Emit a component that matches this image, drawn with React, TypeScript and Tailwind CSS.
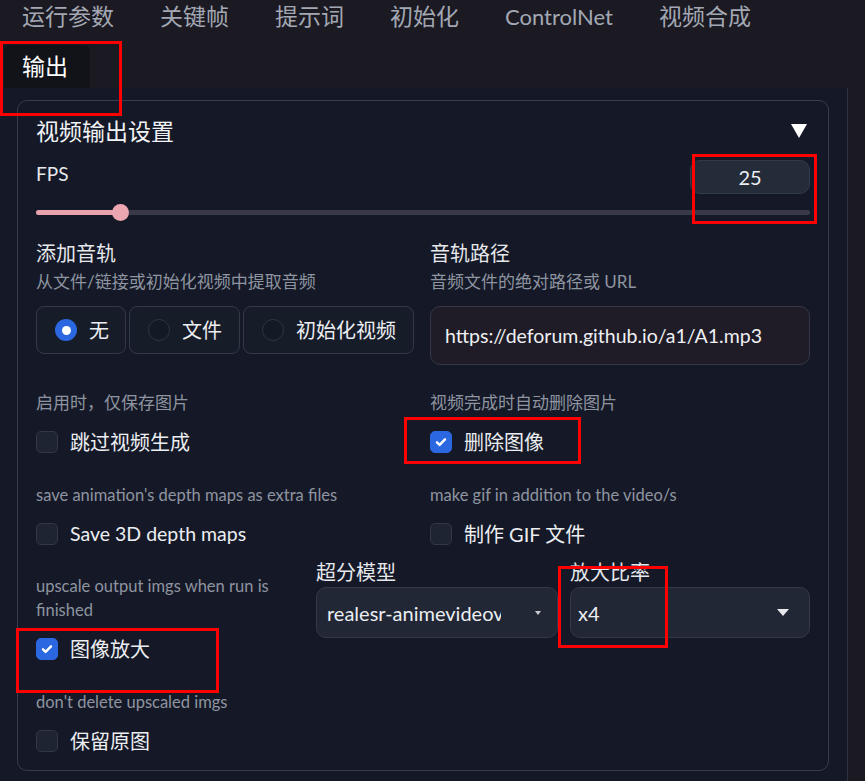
import React from "react";

const tabs = ["运行参数", "关键帧", "提示词", "初始化", "ControlNet", "视频合成"];

const Check = ({ on }: { on?: boolean }) => (
  <span
    className={
      "w-[22px] h-[22px] rounded-[5px] flex items-center justify-center shrink-0 border " +
      (on ? "bg-[#2b67e0] border-[#2b67e0]" : "bg-[#1e2431] border-[#303746]")
    }
  >
    {on && (
      <svg width="14" height="14" viewBox="0 0 14 14">
        <path d="M3 7.3l2.6 2.6L11 4.3" fill="none" stroke="#fff" strokeWidth="2.4" strokeLinecap="round" strokeLinejoin="round" />
      </svg>
    )}
  </span>
);

const CheckRow = ({ label, on, en }: { label: string; on?: boolean; en?: boolean }) => (
  <div className="flex items-center gap-[12px] h-[22px]">
    <Check on={on} />
    <span className={"leading-[22px] text-[#eceef2] " + (en ? "text-[19.5px]" : "text-[20px]")}>{label}</span>
  </div>
);

const Radio = ({ label, on, w }: { label: string; on?: boolean; w: string }) => (
  <div className={"h-[48px] flex items-center gap-[12px] pl-[18px] rounded-[8px] border border-[#323948] bg-[#171c29] " + w}>
    <span
      className={
        "w-[22px] h-[22px] rounded-full flex items-center justify-center shrink-0 " +
        (on ? "bg-[#2b67e0]" : "bg-[#141926] border border-[#2e3543]")
      }
    >
      {on && <span className="w-[9px] h-[9px] rounded-full bg-white" />}
    </span>
    <span className="text-[20px] leading-[22px] text-[#eceef2]">{label}</span>
  </div>
);

const Desc = ({ children, en }: { children: React.ReactNode; en?: boolean }) => (
  <p className={"leading-[20px] text-[#8e94a0] whitespace-nowrap " + (en ? "text-[16.5px]" : "text-[17px]")}>{children}</p>
);

const Label = ({ children }: { children: React.ReactNode }) => (
  <p className="text-[20px] leading-[22px] text-[#e6e8ec]">{children}</p>
);

const RedBox = ({ cls }: { cls: string }) => (
  <div className={"absolute border-[3px] border-[#f00] pointer-events-none " + cls} />
);

export default function App() {
  return (
    <div className="w-[865px] h-[781px] bg-[#1b1a23] relative overflow-hidden font-['Lato','Noto_Sans_CJK_SC',sans-serif]">
      <div className="flex h-[32px] items-center">
        {tabs.map((t) => (
          <span key={t} className="px-[23px] first:pl-[22px] text-[23px] leading-[30px] text-[#a3a8b3] whitespace-nowrap">
            {t === "ControlNet" ? <span className="text-[22px]">{t}</span> : t}
          </span>
        ))}
      </div>
      <div className="h-[56px] pt-[13px] pl-[4px] flex">
        <span className="h-[43px] pl-[18px] pr-[22px] flex items-center bg-[#111319] rounded-t-[6px] text-[23px] text-white">
          输出
        </span>
      </div>
      <div className="w-[848px] h-[693px] bg-[#151927] border-r border-[#2d3240] pt-[12px] pl-[17px] pr-[18px]">
        <div className="h-[671px] rounded-[10px] border border-[#363d4c] px-[18px]">
          <div className="mt-[15px] h-[30px] flex items-center justify-between">
            <h2 className="text-[23px] leading-[30px] text-[#f1f2f5]">视频输出设置</h2>
            <svg width="18" height="16" viewBox="0 0 18 16" className="mr-[2px]">
              <path d="M1 1h16L9 15z" fill="#fff" />
            </svg>
          </div>
          <div className="mt-[14px] flex justify-between items-start">
            <span className="mt-[2px] text-[19px] leading-[24px] text-[#e6e8ec]">FPS</span>
            <div className="w-[120px] h-[34px] rounded-[10px] bg-[#242b39] border border-[#323a48] flex items-center justify-center text-[20px] text-[#eceef2]">
              25
            </div>
          </div>
          <div className="mt-[10px] h-[16px] relative flex items-center">
            <div className="w-full h-[5px] rounded-full bg-[#3a3949] flex">
              <div className="w-[84px] h-full rounded-l-full bg-[#e8a2ad]" />
            </div>
            <span className="absolute left-[76px] top-0 w-[17px] h-[17px] rounded-full bg-[#eba6b1]" />
          </div>
          <div className="mt-[22px] grid grid-cols-2 gap-x-[14px]">
            <div>
              <Label>添加音轨</Label>
              <div className="mt-[8px]">
                <Desc>从文件/链接或初始化视频中提取音频</Desc>
              </div>
              <div className="mt-[14px] flex gap-[3px]">
                <Radio label="无" on w="w-[90px]" />
                <Radio label="文件" w="w-[111px]" />
                <Radio label="初始化视频" w="w-[171px]" />
              </div>
            </div>
            <div>
              <Label>音轨路径</Label>
              <div className="mt-[8px]">
                <Desc>音频文件的绝对路径或 URL</Desc>
              </div>
              <div className="mt-[14px] h-[59px] rounded-[10px] bg-[#1f1c27] border border-[#343846] flex items-center px-[14px] text-[19.5px] text-[#eef0f3]">
                https://deforum.github.io/a1/A1.mp3
              </div>
            </div>
          </div>
          <div className="mt-[28px] grid grid-cols-2 gap-x-[14px]">
            <div>
              <Desc>启用时，仅保存图片</Desc>
              <div className="mt-[18px]">
                <CheckRow label="跳过视频生成" />
              </div>
            </div>
            <div>
              <Desc>视频完成时自动删除图片</Desc>
              <div className="mt-[18px]">
                <CheckRow label="删除图像" on />
              </div>
            </div>
          </div>
          <div className="mt-[32px] grid grid-cols-2 gap-x-[14px]">
            <div>
              <Desc en>save animation's depth maps as extra files</Desc>
              <div className="mt-[18px]">
                <CheckRow label="Save 3D depth maps" en />
              </div>
            </div>
            <div>
              <Desc en>make gif in addition to the video/s</Desc>
              <div className="mt-[18px]">
                <CheckRow label="制作 GIF 文件" />
              </div>
            </div>
          </div>
          <div className="mt-[16px] grid grid-cols-[268px_242px_240px] gap-x-[12px]">
            <div className="pt-[13px]">
              <p className="text-[16.5px] leading-[24px] text-[#8e94a0]">
                upscale output imgs when run is
                <br />
                finished
              </p>
              <div className="mt-[16px]">
                <CheckRow label="图像放大" on />
              </div>
              <div className="mt-[32px]">
                <Desc en>don't delete upscaled imgs</Desc>
              </div>
              <div className="mt-[18px]">
                <CheckRow label="保留原图" />
              </div>
            </div>
            <div>
              <Label>超分模型</Label>
              <div className="mt-[4px] h-[51px] rounded-[10px] bg-[#212735] border border-[#323948] flex items-center pl-[10px] pr-[16px] gap-[8px]">
                <span className="flex-1 overflow-hidden whitespace-nowrap text-[20px] text-[#eceef2]">
                  <span className="block w-[174px] overflow-hidden">realesr-animevideov3</span>
                </span>
                <svg width="6" height="4" viewBox="0 0 6 4">
                  <path d="M0 0h6L3 4z" fill="#c9ccd3" />
                </svg>
              </div>
            </div>
            <div>
              <Label>放大比率</Label>
              <div className="mt-[4px] h-[51px] rounded-[10px] bg-[#212735] border border-[#323948] flex items-center justify-between pl-[7px] pr-[20px]">
                <span className="text-[20px] text-[#eceef2]">x4</span>
                <svg width="12" height="7" viewBox="0 0 12 7">
                  <path d="M0 0h12L6 7z" fill="#e6e8ec" />
                </svg>
              </div>
            </div>
          </div>
        </div>
      </div>

      <RedBox cls="left-0 top-[41px] w-[122px] h-[75px]" />
      <RedBox cls="left-[692px] top-[154px] w-[125px] h-[70px]" />
      <RedBox cls="left-[404px] top-[417px] w-[177px] h-[47px]" />
      <RedBox cls="left-[16px] top-[628px] w-[203px] h-[65px]" />
      <RedBox cls="left-[558px] top-[566px] w-[110px] h-[82px]" />
    </div>
  );
}
